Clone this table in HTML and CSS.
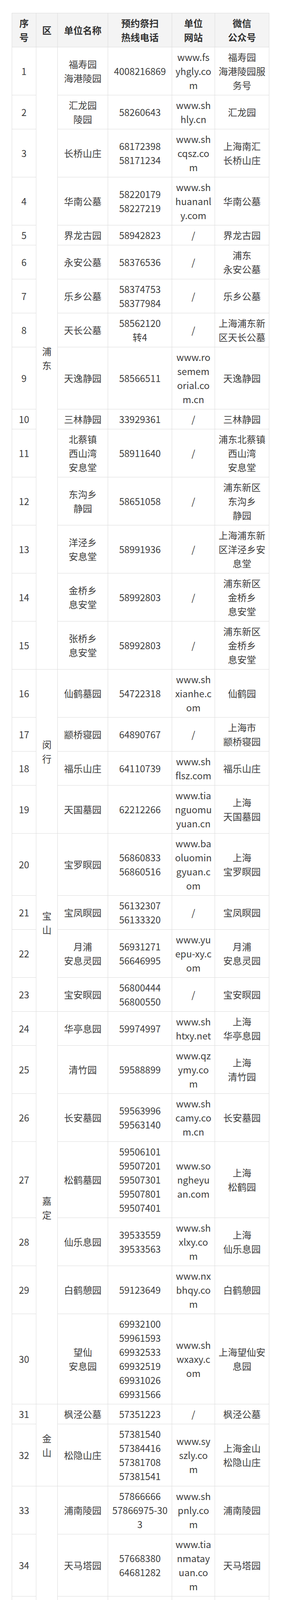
FILE: index.html
```html
<!DOCTYPE html>
<html lang="zh-CN">
<head>
<meta charset="utf-8">
<title>上海公墓预约祭扫信息</title>
<link rel="stylesheet" href="styles.css">
</head>
<body>
<div class="wrap">
<table class="list">
<colgroup>
<col class="c-no"><col class="c-area"><col class="c-name"><col class="c-tel"><col class="c-site"><col class="c-wx">
</colgroup>
<thead>
<tr><th>序<br>号</th><th>区</th><th>单位名称</th><th>预约祭扫<br>热线电话</th><th>单位<br>网站</th><th>微信<br>公众号</th></tr>
</thead>
<tbody>
<tr><td>1</td><td class="area" rowspan="15">浦东</td><td>福寿园<br>海港陵园</td><td>4008216869</td><td class="site">www.fs<br>yhgly.co<br>m</td><td>福寿园<br>海港陵园服<br>务号</td></tr>
<tr><td>2</td><td>汇龙园<br>陵园</td><td>58260643</td><td class="site">www.sh<br>hly.cn</td><td>汇龙园</td></tr>
<tr><td>3</td><td>长桥山庄</td><td>68172398<br>58171234</td><td class="site">www.sh<br>cqsz.co<br>m</td><td>上海南汇<br>长桥山庄</td></tr>
<tr><td>4</td><td>华南公墓</td><td>58220179<br>58227219</td><td class="site">www.sh<br>huananl<br>y.com</td><td>华南公墓</td></tr>
<tr><td>5</td><td>界龙古园</td><td>58942823</td><td class="site">/</td><td>界龙古园</td></tr>
<tr><td>6</td><td>永安公墓</td><td>58376536</td><td class="site">/</td><td>浦东<br>永安公墓</td></tr>
<tr><td>7</td><td>乐乡公墓</td><td>58374753<br>58377984</td><td class="site">/</td><td>乐乡公墓</td></tr>
<tr><td>8</td><td>天长公墓</td><td>58562120<br>转4</td><td class="site">/</td><td>上海浦东新<br>区天长公墓</td></tr>
<tr><td>9</td><td>天逸静园</td><td>58566511</td><td class="site">www.ro<br>semem<br>orial.co<br>m.cn</td><td>天逸静园</td></tr>
<tr><td>10</td><td>三林静园</td><td>33929361</td><td class="site">/</td><td>三林静园</td></tr>
<tr><td>11</td><td>北蔡镇<br>西山湾<br>安息堂</td><td>58911640</td><td class="site">/</td><td>浦东北蔡镇<br>西山湾<br>安息堂</td></tr>
<tr><td>12</td><td>东沟乡<br>静园</td><td>58651058</td><td class="site">/</td><td>浦东新区<br>东沟乡<br>静园</td></tr>
<tr><td>13</td><td>洋泾乡<br>安息堂</td><td>58991936</td><td class="site">/</td><td>上海浦东新<br>区洋泾乡安<br>息堂</td></tr>
<tr><td>14</td><td>金桥乡<br>息安堂</td><td>58992803</td><td class="site">/</td><td>浦东新区<br>金桥乡<br>息安堂</td></tr>
<tr><td>15</td><td>张桥乡<br>息安堂</td><td>58992803</td><td class="site">/</td><td>浦东新区<br>金桥乡<br>息安堂</td></tr>
<tr><td>16</td><td class="area" rowspan="4">闵行</td><td>仙鹤墓园</td><td>54722318</td><td class="site">www.sh<br>xianhe.c<br>om</td><td>仙鹤园</td></tr>
<tr><td>17</td><td>颛桥寝园</td><td>64890767</td><td class="site">/</td><td>上海市<br>颛桥寝园</td></tr>
<tr><td>18</td><td>福乐山庄</td><td>64110739</td><td class="site">www.sh<br>flsz.com</td><td>福乐山庄</td></tr>
<tr><td>19</td><td>天国墓园</td><td>62212266</td><td class="site">www.tia<br>nguomu<br>yuan.cn</td><td>上海<br>天国墓园</td></tr>
<tr><td>20</td><td class="area" rowspan="4">宝山</td><td>宝罗瞑园</td><td>56860833<br>56860516</td><td class="site">www.ba<br>oluomin<br>gyuan.c<br>om</td><td>上海<br>宝罗瞑园</td></tr>
<tr><td>21</td><td>宝凤瞑园</td><td>56132307<br>56133320</td><td class="site">/</td><td>宝凤瞑园</td></tr>
<tr><td>22</td><td>月浦<br>安息灵园</td><td>56931271<br>56646995</td><td class="site">www.yu<br>epu-xy.c<br>om</td><td>月浦<br>安息灵园</td></tr>
<tr><td>23</td><td>宝安瞑园</td><td>56800444<br>56800550</td><td class="site">/</td><td>宝安瞑园</td></tr>
<tr><td>24</td><td class="area" rowspan="7">嘉定</td><td>华亭息园</td><td>59974997</td><td class="site">www.sh<br>htxy.net</td><td>上海<br>华亭息园</td></tr>
<tr><td>25</td><td>清竹园</td><td>59588899</td><td class="site">www.qz<br>ymy.co<br>m</td><td>上海<br>清竹园</td></tr>
<tr><td>26</td><td>长安墓园</td><td>59563996<br>59563140</td><td class="site">www.sh<br>camy.co<br>m.cn</td><td>长安墓园</td></tr>
<tr><td>27</td><td>松鹤墓园</td><td>59506101<br>59507201<br>59507301<br>59507801<br>59507401</td><td class="site">www.so<br>ngheyu<br>an.com</td><td>上海<br>松鹤园</td></tr>
<tr><td>28</td><td>仙乐息园</td><td>39533559<br>39533563</td><td class="site">www.sh<br>xlxy.co<br>m</td><td>上海<br>仙乐息园</td></tr>
<tr><td>29</td><td>白鹤憩园</td><td>59123649</td><td class="site">www.nx<br>bhqy.co<br>m</td><td>白鹤憩园</td></tr>
<tr><td>30</td><td>望仙<br>安息园</td><td>69932100<br>59961593<br>69932533<br>69932519<br>69931026<br>69931566</td><td class="site">www.sh<br>wxaxy.c<br>om</td><td>上海望仙安<br>息园</td></tr>
<tr><td>31</td><td class="area" rowspan="2">金山</td><td>枫泾公墓</td><td>57351223</td><td class="site">/</td><td>枫泾公墓</td></tr>
<tr><td>32</td><td>松隐山庄</td><td>57381540<br>57384416<br>57381708<br>57381541</td><td class="site">www.sy<br>szly.co<br>m</td><td>上海金山<br>松隐山庄</td></tr>
<tr><td>33</td><td class="area" rowspan="5">松江</td><td>浦南陵园</td><td>57866666<br>57866975-30<br>3</td><td class="site">www.sh<br>pnly.co<br>m</td><td>浦南陵园</td></tr>
<tr><td>34</td><td>天马塔园</td><td>57668380<br>64681282</td><td class="site">www.tia<br>nmatay<br>uan.co<br>m</td><td>天马塔园</td></tr>
<tr><td>35</td><td>华夏公墓</td><td>57761055<br>57762987</td><td class="site">www.sh<br>huaxiag<br>ongmu.<br>com</td><td>上海<br>华夏公墓</td></tr>
<tr><td>36</td><td>天马山<br>公墓</td><td>57660353</td><td class="site">www.tm<br>sgm.co<br>m</td><td>天马山<br>公墓</td></tr>
<tr><td>37</td><td>光启息安<br>骨灰堂</td><td>57617079</td><td class="site">/</td><td>上海光启息<br>安<br>骨灰堂</td></tr>
<tr><td>38</td><td class="area" rowspan="9">青浦</td><td>福泉山<br>留园</td><td>39876104<br>39876278</td><td class="site">/</td><td>上海福泉山<br>留园</td></tr>
<tr><td>39</td><td>福寿园</td><td>39820026<br>4008203417</td><td class="site">http://s<br>h.fsygro<br>up.com</td><td>上海<br>福寿园</td></tr>
<tr><td>40</td><td>淀山湖<br>归园</td><td>59238754<br>59238806</td><td class="site">www.gu<br>iyuang<br>m.com</td><td>上海市淀山<br>湖归园公墓</td></tr>
<tr><td>41</td><td>徐泾西园</td><td>59760425</td><td class="site">www.xu<br>jingxiyu<br>an.com/</td><td>上海徐泾西<br>园<br>服务号</td></tr>
<tr><td>42</td><td>卫家角<br>息园</td><td>59881427<br>39853613</td><td class="site">www.wj<br>jxy.com</td><td>卫家角<br>息园</td></tr>
<tr><td>43</td><td>青浦静园</td><td>59834448<br>59831886<br>59830678<br>59834444</td><td class="site">www.zh<br>izunyua<br>n.com</td><td>上海至尊园<br>静园</td></tr>
<tr><td>44</td><td>至尊园</td><td>59834448<br>59831886<br>59830678<br>59834444</td><td class="site">www.zh<br>izunyua<br>n.com</td><td>上海至尊园<br>静园</td></tr>
<tr><td>45</td><td>九天陵园</td><td>39801028<br>64153188</td><td class="site">www.jtl<br>y9.com</td><td>上海<br>九天爱心俱<br>乐部</td></tr>
<tr><td>46</td><td>玉佛<br>功德园</td><td>69247826<br>转分机号0</td><td class="site">/</td><td></td></tr>
<tr><td>47</td><td class="area" rowspan="3">奉贤</td><td>滨海古园</td><td>57164025<br>57160746<br>57163968</td><td class="site">www.sh<br>bhgy.co<br>m</td><td>上海滨海古<br>园、上海滨<br>海古园古园<br>商城</td></tr>
<tr><td>48</td><td>海湾寝园</td><td>57127576</td><td class="site">www.sh<br>hwy.cn</td><td>上海<br>海湾园</td></tr>
<tr><td>49</td><td>永福园陵</td><td>57133612</td><td class="site">www.sh<br>anghai-<br>yfy.com</td><td>上海<br>永福园陵</td></tr>
<tr><td>50</td><td class="area" rowspan="5">崇明</td><td>瀛裕瞑园</td><td>59431912</td><td class="site">/</td><td>上海<br>瀛裕瞑园</td></tr>
<tr><td>51</td><td>瀛新园</td><td>59376000<br>59376333<br>59371791</td><td class="site">www.sh<br>yxgy.co<br>m</td><td>瀛新园</td></tr>
<tr><td>52</td><td>长亭冥园</td><td>56851673</td><td class="site">/</td><td>长亭冥园</td></tr>
<tr><td>53</td><td>鳌山瞑园</td><td>69693732</td><td class="site">www.ao<br>shanmi<br>ngyuan.<br>com</td><td>上海市崇明<br>区<br>鳌山瞑园</td></tr>
<tr><td>54</td><td>明珠公墓</td><td>56891492</td><td class="site">/</td><td>明珠公墓</td></tr>
</tbody>
</table>
</div>
</body>
</html>
```

FILE: styles.css
```css
html, body {
  margin: 0;
  padding: 0;
  background: #ffffff;
}

body {
  font-family: "Noto Sans CJK SC", "Noto Sans", sans-serif;
  color: #3e3e3e;
}

.wrap {
  padding: 33px 31px 0 30px;
}

.list {
  width: 659px;
  table-layout: fixed;
  border-collapse: collapse;
  font-size: 24px;
  line-height: 36px;
}

.c-no { width: 62px; }
.c-area { width: 55px; }
.c-name { width: 129px; }
.c-tel { width: 164px; }
.c-site { width: 110px; }
.c-wx { width: 139px; }

.list th,
.list td {
  border: 1px solid #dcdcdc;
  padding: 7px 4px;
  text-align: center;
  vertical-align: middle;
}

.list th {
  background: #f4f4f4;
  color: #333333;
  font-weight: bold;
}

.list td.site {
  white-space: nowrap;
}

.list td.area {
  padding: 7px 8px;
}
```
